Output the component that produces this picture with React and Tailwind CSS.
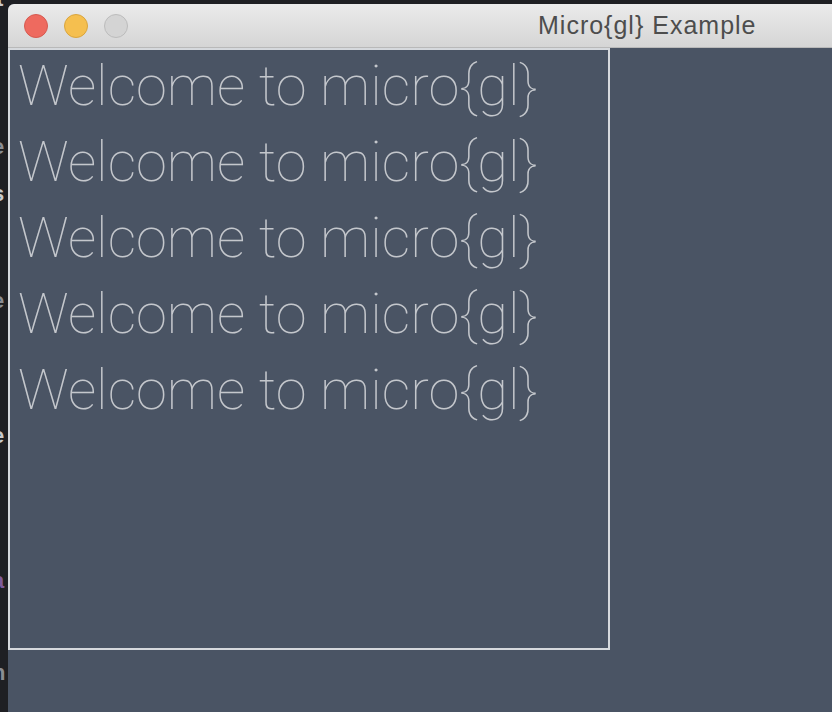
export default function App() {
  const lines = [0, 1, 2, 3, 4]

  return (
    <div className="w-[832px] h-[712px] bg-[#1e1f23] flex overflow-hidden">
      {/* editor peeking out behind the window */}
      <div className="w-[8px] shrink-0 relative overflow-hidden font-['Liberation_Sans',sans-serif] text-[22px] font-bold text-[#c8c9cc] leading-none">
        <span className="absolute left-[-4px] top-[-12px]">t</span>
        <span className="absolute left-[-8px] top-[136px] text-[#8a8d93]">e</span>
        <span className="absolute left-[-8px] top-[183px]">s</span>
        <span className="absolute left-[-8px] top-[290px] text-[#8a8d93]">e</span>
        <span className="absolute left-[-8px] top-[425px]">e</span>
        <span className="absolute left-[-8px] top-[570px] text-[#7d5a9b]">a</span>
        <span className="absolute left-[-8px] top-[662px] text-[#8a8d93]">n</span>
      </div>

      <div className="flex-1 mt-[4px] flex flex-col bg-[#4a5464] rounded-tl-[6px] overflow-hidden">
        <div className="h-[44px] shrink-0 flex items-center bg-gradient-to-b from-[#ebebeb] to-[#d5d5d5] border-b border-[#b9b9b9]">
          <div className="flex gap-[16px] pl-[16px]">
            <span className="w-[24px] h-[24px] rounded-full bg-[#ee6a5f] border border-[#d65a50]" />
            <span className="w-[24px] h-[24px] rounded-full bg-[#f5bf4f] border border-[#d9a53e]" />
            <span className="w-[24px] h-[24px] rounded-full bg-[#d4d4d4] border border-[#bcbcbc]" />
          </div>
          <span className="ml-[410px] font-['Liberation_Sans',sans-serif] text-[25px] tracking-[1px] text-[#4d4d4d]">
            Micro{'{gl}'} Example
          </span>
        </div>

        <div className="w-[602px] h-[602px] border-2 border-[#d6d9dd] pl-[8px]">
          <div className="-mt-[2px]">
            {lines.map((i) => (
              <div
                key={i}
                className="font-['Roboto',sans-serif] font-thin text-[56px] leading-[76px] text-[#c4c7cc] whitespace-nowrap"
              >
                Welcome to micro{'{gl}'}
              </div>
            ))}
          </div>
        </div>
      </div>
    </div>
  )
}
